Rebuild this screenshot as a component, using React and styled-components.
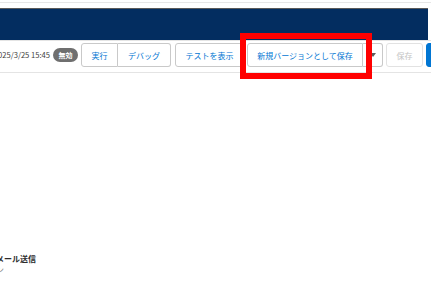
import React from "react";
import styled, { createGlobalStyle } from "styled-components";

const Global = createGlobalStyle`
  html, body { margin: 0; padding: 0; background: #fff; overflow: hidden; }
  body { font-family: "Noto Sans CJK JP", "Noto Sans", sans-serif; }
  #root { width: 431px; height: 293px; overflow: hidden; position: relative; }
`;

const Page = styled.div`
  position: relative;
  width: 431px;
  height: 293px;
  overflow: hidden;
`;

const Spacer = styled.div`
  height: ${(p) => p.$h}px;
  background: ${(p) => p.$bg || "transparent"};
  margin-right: ${(p) => p.$mr || 0}px;
`;

const Navy = styled.div`
  height: 31px;
  background: #032d60;
  margin-right: 3px;
`;

const Toolbar = styled.div`
  display: flex;
  justify-content: flex-end;
  align-items: center;
  gap: 3px;
  margin-right: -45px;
  padding: 2px 0 5px;
  border-top: 1px solid #e4e4e4;
  border-bottom: 1px solid #e4e4e4;
  white-space: nowrap;
  & > * { flex-shrink: 0; }
`;

const DateText = styled.span`
  font-size: 7.6px;
  color: #3e3e3c;
  line-height: 24px;
`;

const Badge = styled.span`
  display: inline-flex;
  align-items: center;
  justify-content: center;
  width: 25px;
  height: 14px;
  border-radius: 7px;
  background: #6f6f6f;
  color: #fff;
  font-size: 7px;
  font-weight: 700;
`;

const Group = styled.div`
  display: flex;
  margin-left: ${(p) => p.$ml || 0}px;
`;

const Button = styled.button`
  flex-shrink: 0;
  height: 24px;
  width: ${(p) => p.$w}px;
  padding: 0;
  box-sizing: border-box;
  font-family: inherit;
  font-size: 8px;
  color: ${(p) => (p.$disabled ? "#c4c4c4" : "#0176d3")};
  background: #fff;
  border: 1px solid ${(p) => (p.$disabled ? "#e2e2e2" : "#c9c9c9")};
  border-radius: 3px;
  display: flex;
  align-items: center;
  justify-content: center;

  ${Group} > &:not(:last-child) {
    border-top-right-radius: 0;
    border-bottom-right-radius: 0;
  }
  ${Group} > &:not(:first-child) {
    border-top-left-radius: 0;
    border-bottom-left-radius: 0;
    border-left: none;
  }
`;

const Primary = styled.button`
  height: 24px;
  width: 50px;
  padding: 0;
  box-sizing: border-box;
  font-family: inherit;
  font-size: 8px;
  color: #fff;
  background: #0176d3;
  border: 1px solid #0176d3;
  border-radius: 3px;
`;

const Caret = styled.span`
  width: 0;
  height: 0;
  border-left: 3px solid transparent;
  border-right: 3px solid transparent;
  border-top: 4px solid #5c5c5c;
`;

const Content = styled.div`
  padding-top: 180px;
  margin-left: -4px;
`;

const Title = styled.div`
  font-size: 8px;
  font-weight: 700;
  color: #2b2b2b;
  line-height: 11px;
`;

const Sub = styled.div`
  font-size: 8px;
  color: #8a8a8a;
  line-height: 11px;
`;

const Highlight = styled.div`
  position: absolute;
  left: 240px;
  top: 33px;
  width: 132px;
  height: 46px;
  box-sizing: border-box;
  border: 6px solid #ff0000;
`;

export default function App() {
  return (
    <Page>
      <Global />
      <Spacer $h={2} />
      <Spacer $h={1} $bg="#e6e6e6" />
      <Spacer $h={5} />
      <Spacer $h={1} $bg="#5a5a5a" $mr={3} />
      <Navy />
      <Toolbar>
        <DateText>2025/3/25 15:45</DateText>
        <Badge>無効</Badge>
        <Group>
          <Button $w={37}>実行</Button>
          <Button $w={53}>デバッグ</Button>
        </Group>
        <Group $ml={1}>
          <Button $w={69}>テストを表示</Button>
        </Group>
        <Group>
          <Button $w={116}>新規バージョンとして保存</Button>
          <Button $w={20}>
            <Caret />
          </Button>
        </Group>
        <Button $w={37} $disabled>
          保存
        </Button>
        <Primary>有効化</Primary>
      </Toolbar>
      <Content>
        <Title>メール送信</Title>
        <Sub>ン</Sub>
      </Content>
      <Highlight />
    </Page>
  );
}
